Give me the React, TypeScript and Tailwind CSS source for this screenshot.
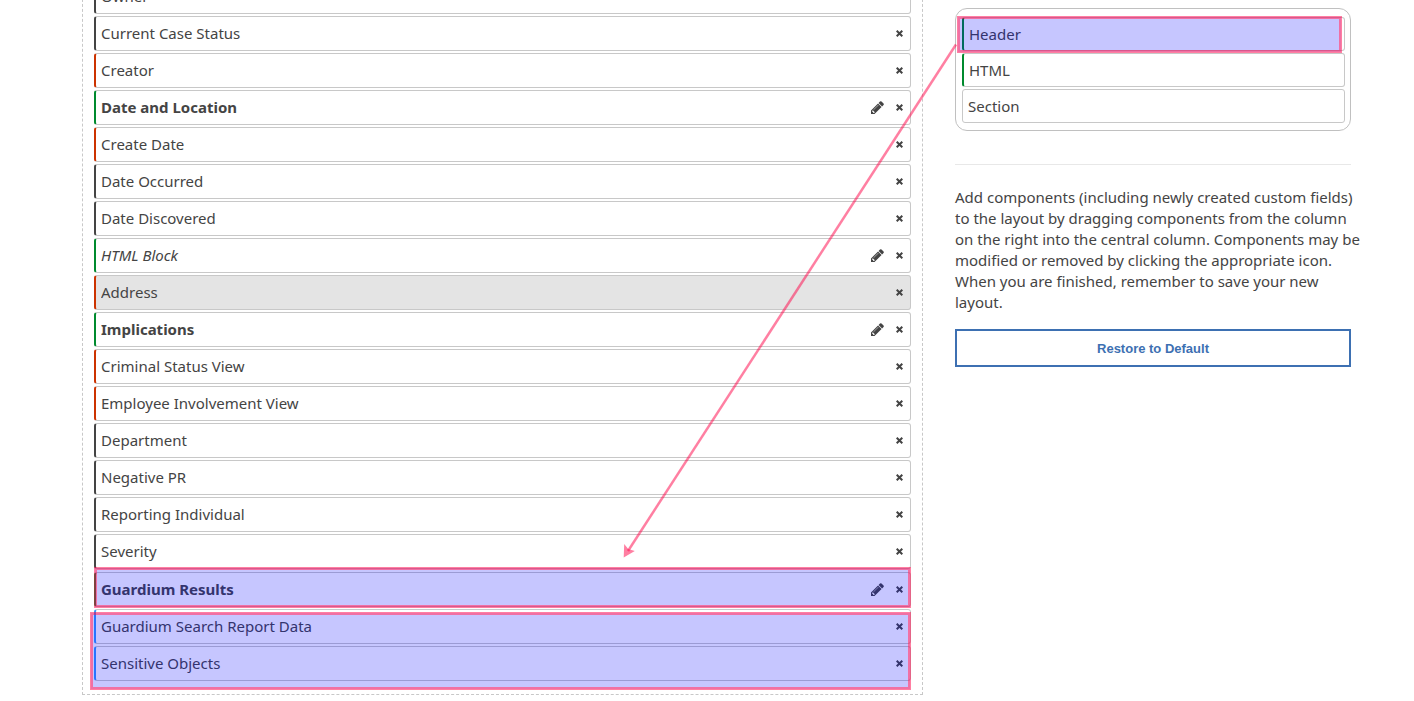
import React from "react";

type Tone = "dark" | "red" | "green" | "blue" | "none";
type Variant = "field" | "heading" | "block" | "inactive";
type Item = { label: string; tone: Tone; variant?: Variant };

const tones: Record<Tone, string> = {
  dark: "border-l-2 border-l-[#444444]",
  red: "border-l-2 border-l-[#cc3300]",
  green: "border-l-2 border-l-[#008a2e]",
  blue: "border-l-2 border-l-[#3399ff]",
  none: "",
};

const variants: Record<Variant, string> = {
  field: "bg-white",
  heading: "bg-white font-bold",
  block: "bg-white italic",
  inactive: "bg-[#e4e4e4]",
};

const items: Item[] = [
  { label: "Owner", tone: "dark" },
  { label: "Current Case Status", tone: "dark" },
  { label: "Creator", tone: "red" },
  { label: "Date and Location", tone: "green", variant: "heading" },
  { label: "Create Date", tone: "red" },
  { label: "Date Occurred", tone: "dark" },
  { label: "Date Discovered", tone: "dark" },
  { label: "HTML Block", tone: "green", variant: "block" },
  { label: "Address", tone: "red", variant: "inactive" },
  { label: "Implications", tone: "green", variant: "heading" },
  { label: "Criminal Status View", tone: "red" },
  { label: "Employee Involvement View", tone: "red" },
  { label: "Department", tone: "dark" },
  { label: "Negative PR", tone: "dark" },
  { label: "Reporting Individual", tone: "dark" },
  { label: "Severity", tone: "dark" },
];

const results: Item = { label: "Guardium Results", tone: "green", variant: "heading" };

const reportItems: Item[] = [
  { label: "Guardium Search Report Data", tone: "blue" },
  { label: "Sensitive Objects", tone: "blue" },
];

function PencilIcon() {
  return (
    <svg viewBox="0 0 1536 1536" className="size-[13px]" fill="currentColor" aria-hidden="true">
      <path d="M363 1408l91-91-235-235-91 91v107h128v128h107zM886 480q0-22-22-22-10 0-17 7l-542 542q-7 7-7 17 0 22 22 22 10 0 17-7l542-542q7-7 7-17zM832 288l416 416-832 832H0v-416zM1515 384q0 53-37 90l-166 166-416-416 166-165q36-38 90-38 53 0 91 38l235 234q37 39 37 91z" />
    </svg>
  );
}

function CloseIcon() {
  return (
    <svg viewBox="0 0 7 7" className="size-[7px]" fill="none" stroke="currentColor" strokeWidth="2" aria-hidden="true">
      <path d="M0.7 0.7 6.3 6.3M6.3 0.7 0.7 6.3" />
    </svg>
  );
}

function Highlight({ className }: { className: string }) {
  return (
    <div
      className={`pointer-events-none absolute border-2 border-[#e4005d8f] bg-[#0000ff39] bg-clip-padding outline outline-[#ff004680] ${className}`}
    />
  );
}

function Row({ item }: { item: Item }) {
  const variant = item.variant ?? "field";
  const editable = variant === "heading" || variant === "block";
  return (
    <div
      className={`flex h-[35px] items-center rounded-[3px] border border-[#c8c8c8] pl-[5px] pr-[7px] ${tones[item.tone]} ${variants[variant]}`}
    >
      <span className="flex-1 truncate">{item.label}</span>
      {editable && (
        <button type="button" aria-label={`Edit ${item.label}`} className="mr-3">
          <PencilIcon />
        </button>
      )}
      <button type="button" aria-label={`Remove ${item.label}`}>
        <CloseIcon />
      </button>
    </div>
  );
}

function PaletteItem({ label, tone }: { label: string; tone: Tone }) {
  return (
    <div className={`flex h-[34px] items-center rounded-[3px] border border-[#c8c8c8] bg-white pl-[5px] ${tones[tone]}`}>
      {label}
    </div>
  );
}

export default function App() {
  return (
    <div className="relative overflow-hidden bg-white font-['Noto_Sans',sans-serif] text-[15px] leading-[21px] text-[#444444]">
      <div className="grid grid-cols-[minmax(0,841fr)_minmax(0,396fr)] items-start gap-8 pl-[82px] pr-[63px]">
        <main className="-mt-[21px] flex flex-col gap-0.5 border border-t-0 border-dashed border-[#c8c8c8] px-[11px] pb-[13px]">
          {items.map((item) => (
            <Row key={item.label} item={item} />
          ))}
          <div className="relative mt-px">
            <Row item={results} />
            <Highlight className="-top-1 bottom-0 left-px right-px" />
          </div>
          <div className="relative flex flex-col gap-0.5">
            {reportItems.map((item) => (
              <Row key={item.label} item={item} />
            ))}
            <Highlight className="top-1 -bottom-2 -left-[3px] right-px" />
          </div>
        </main>

        <aside className="pt-2">
          <div className="flex flex-col gap-0.5 rounded-xl border border-[#c0c0c0] px-1.5 py-2 pr-[5px] pb-[7px]">
            <div className="relative">
              <PaletteItem label="Header" tone="green" />
              <Highlight className="top-0 -bottom-px -left-1 right-1" />
            </div>
            <PaletteItem label="HTML" tone="green" />
            <PaletteItem label="Section" tone="none" />
          </div>
          <hr className="mb-[22px] mt-[33px] border-[#e8e8e8]" />
          <p className="-mr-4">
            Add components (including newly created custom fields)
            <br />
            to the layout by dragging components from the column
            <br />
            on the right into the central column. Components may be
            <br />
            modified or removed by clicking the appropriate icon.
            <br />
            When you are finished, remember to save your new
            <br />
            layout.
          </p>
          <button
            type="button"
            className="mt-4 h-[38px] w-full border-2 border-[#3d70b2] bg-white font-['Liberation_Sans',sans-serif] text-[13px] font-bold text-[#3d70b2]"
          >
            Restore to Default
          </button>
        </aside>
      </div>

      <svg
        className="pointer-events-none absolute left-0 top-0 h-[701px] w-[1414px]"
        viewBox="0 0 1414 701"
        fill="none"
        aria-hidden="true"
      >
        <path d="M956 44.5 628 551" stroke="#ff0046" strokeOpacity="0.5" strokeWidth="2.5" />
        <path d="M623.7 557.5 624.2 544 628.2 549 634.8 551Z" fill="#ff0046" fillOpacity="0.5" />
      </svg>
    </div>
  );
}
